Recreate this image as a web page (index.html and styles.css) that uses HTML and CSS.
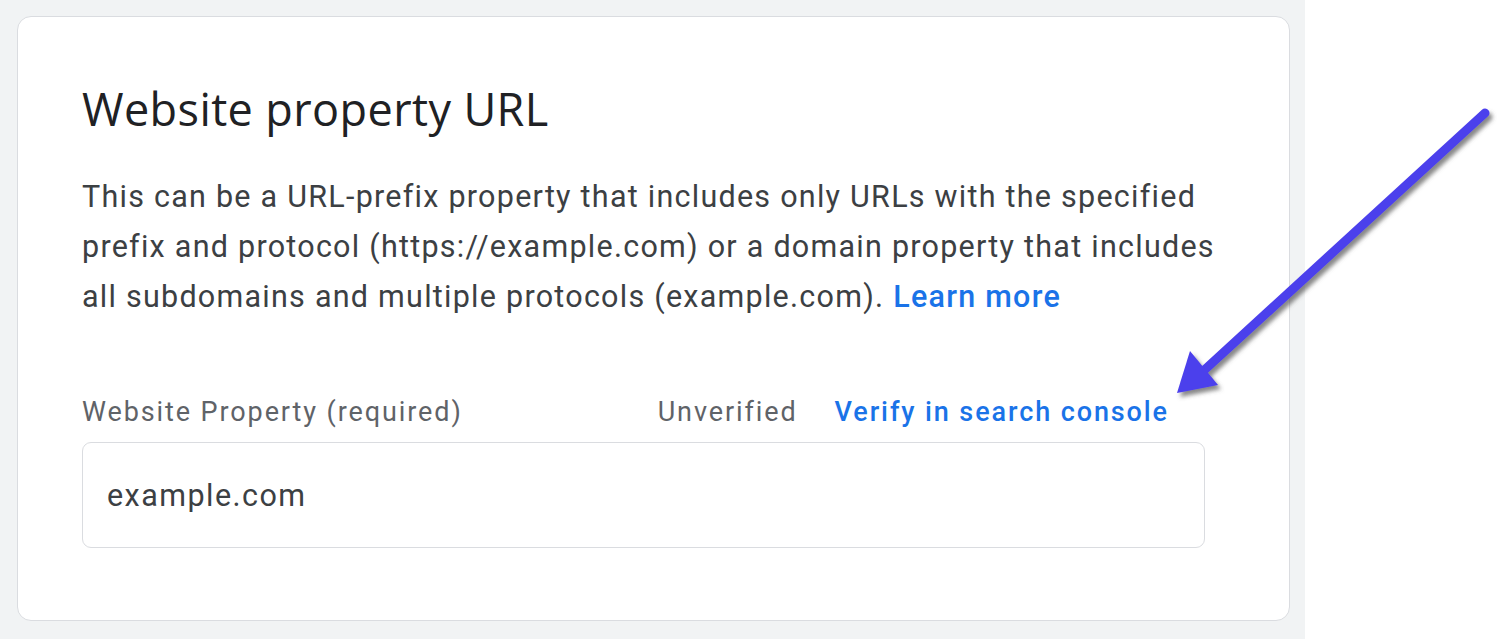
FILE: index.html
```html
<!DOCTYPE html>
<html>
<head>
<meta charset="utf-8">
<link rel="stylesheet" href="styles.css">
</head>
<body>
<div class="page">
  <div class="panel">
    <div class="card">
      <h1 class="title">Website property URL</h1>
      <p class="desc">This can be a URL-prefix property that includes only URLs with the specified prefix and protocol (https://example.com) or a domain property that includes all subdomains and multiple protocols (example.com). <a class="link">Learn more</a></p>
      <div class="field">
        <div class="field-head">
          <span class="label">Website Property (required)</span>
          <span class="status">Unverified</span>
          <a class="link verify">Verify in search console</a>
        </div>
        <div class="input">example.com</div>
      </div>
    </div>
  </div>
  <div class="side"></div>
  <svg class="arrow" width="1500" height="639" viewBox="0 0 1500 639">
    <defs>
      <filter id="sh" x="-20%" y="-20%" width="140%" height="140%">
        <feDropShadow dx="3" dy="4" stdDeviation="2" flood-color="#555" flood-opacity="0.7"/>
      </filter>
    </defs>
    <g filter="url(#sh)">
      <line x1="1485" y1="113" x2="1200" y2="374" stroke="#4c3fec" stroke-width="9" stroke-linecap="round"/>
      <polygon points="1177,393 1190,351 1218,385" fill="#4c3fec"/>
    </g>
  </svg>
</div>
</body>
</html>
```
FILE: styles.css
```css
html, body {
  margin: 0;
  padding: 0;
  background: #ffffff;
}
.page {
  position: relative;
  display: flex;
  width: 1500px;
  height: 639px;
  overflow: hidden;
  font-family: Roboto, "Liberation Sans", sans-serif;
}
.panel {
  width: 1305px;
  flex: none;
  background: #f1f3f4;
  padding: 16px 15px 0 17px;
  box-sizing: border-box;
}
.side {
  flex: 1;
  background: #ffffff;
}
.card {
  background: #ffffff;
  border: 1.5px solid #dadce0;
  border-radius: 14px;
  height: 605px;
  box-sizing: border-box;
  padding: 67px 30px 0 64px;
}
.title {
  margin: 0;
  font-family: "Open Sans", Roboto, sans-serif;
  font-weight: 400;
  font-size: 45px;
  line-height: 50px;
  color: #202124;
  letter-spacing: 0.4px;
}
.desc {
  margin: 38px 0 0 0;
  font-size: 30.5px;
  line-height: 50px;
  letter-spacing: 1.25px;
  color: #3c4043;
  max-width: 1160px;
}
.link {
  color: #1a73e8;
  font-weight: 500;
}
.field {
  margin-top: 72px;
  width: 1123px;
}
.field-head {
  display: flex;
  align-items: baseline;
  font-size: 27px;
  line-height: 36px;
  letter-spacing: 1.9px;
  color: #5f6368;
}
.label {
  flex: 1;
}
.status {
  margin-right: 37px;
}
.verify {
  margin-right: 36px;
}
.input {
  margin-top: 12px;
  height: 106px;
  box-sizing: border-box;
  border: 1.5px solid #dadce0;
  border-radius: 9px;
  padding: 0 24px;
  display: flex;
  align-items: center;
  font-size: 30.5px;
  letter-spacing: 1.45px;
  color: #3c4043;
}
.arrow {
  position: absolute;
  left: 0;
  top: 0;
  pointer-events: none;
}
```
